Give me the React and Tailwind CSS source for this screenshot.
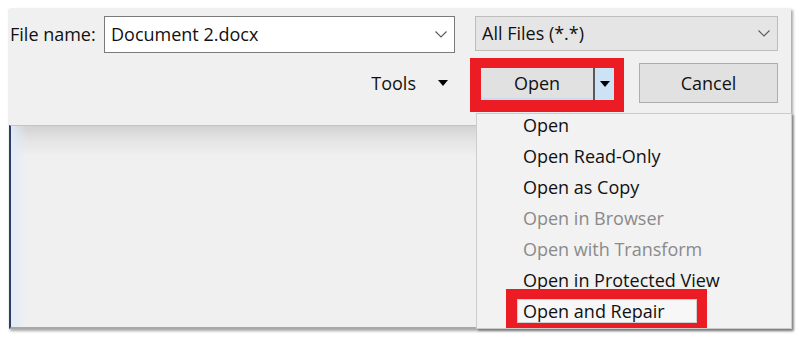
import React from 'react';

const font = { fontFamily: '"Open Sans", "Noto Sans", Arial, sans-serif' };

function Chevron() {
  return (
    <svg width="12" height="7" viewBox="0 0 12 7" className="shrink-0">
      <polyline points="0.5,0.5 6,6 11.5,0.5" fill="none" stroke="#5a5a5a" strokeWidth="1.1" />
    </svg>
  );
}

function Triangle() {
  return (
    <svg width="10" height="6" viewBox="0 0 10 6" className="shrink-0">
      <polygon points="0,0 10,0 5,6" fill="#000" />
    </svg>
  );
}

const menuItems = [
  { label: 'Open' },
  { label: 'Open Read-Only' },
  { label: 'Open as Copy' },
  { label: 'Open in Browser', disabled: true },
  { label: 'Open with Transform', disabled: true },
  { label: 'Open in Protected View' },
];

export default function App() {
  return (
    <div className="w-[800px] h-[337px] bg-white pt-[8px] pl-[8px] overflow-hidden" style={font}>
      <div className="relative w-[783px] h-[321px] bg-[#f0f0f0] rounded-tl-[3px] shadow-[2px_2px_3px_rgba(0,0,0,0.35)] flex flex-col text-[18px] text-[#111]">
        {/* top section */}
        <div className="h-[117px] pt-[8px] pl-[2px] pr-[13px] flex flex-col">
          <div className="flex items-center h-[37px]">
            <span className="w-[94px] shrink-0">File name:</span>
            <div className="w-[351px] h-[37px] bg-white border border-[#7a7a7a] flex items-center justify-between pl-[6px] pr-[7px]">
              <span>Document 2.docx</span>
              <Chevron />
            </div>
            <div className="ml-[20px] w-[303px] h-[35px] bg-[#e5e5e5] border border-[#bdbdbd] flex items-center justify-between pl-[6px] pr-[7px] self-start">
              <span>All Files (*.*)</span>
              <Chevron />
            </div>
          </div>
          <div className="flex justify-end items-start mt-[5px]">
            <div className="flex items-center h-[50px] gap-[22px]">
              <span>Tools</span>
              <Triangle />
            </div>
            <div className="ml-[22px] flex border-[#ec1c24] border-t-[10px] border-b-[12px] border-l-[11px] border-r-[10px] relative z-10">
              <div className="w-[112px] h-[32px] bg-[#e1e1e1] border-b-[2px] border-[#c9dcef] flex items-center justify-center">
                Open
              </div>
              <div className="w-[2px] h-[32px] bg-[#5a5a5a]" />
              <div className="w-[19px] h-[32px] bg-[#cce2f5] flex items-center justify-center">
                <Triangle />
              </div>
            </div>
            <div className="ml-[15px] mt-[5px] w-[139px] h-[40px] bg-[#e1e1e1] border border-[#adadad] flex items-center justify-center">
              Cancel
            </div>
          </div>
        </div>

        {/* lower section */}
        <div className="flex-1 border-t border-[#c4c4c4] border-b-[2px] border-b-[#a8a8a8] border-l-[2px] border-l-[#2c3f66] ml-[1px] bg-[linear-gradient(to_bottom,#d2d2d2_0px,#e4e4e4_14px,#f0f0f0_30px)]">
          <div className="w-[16px] h-full bg-[linear-gradient(to_right,rgba(225,235,248,0.9),rgba(240,240,240,0))]" />
        </div>

        {/* dropdown menu */}
        <div className="absolute left-[468px] top-[105px] w-[316px] h-[216px] bg-[#f2f2f2] border border-[#cccccc] shadow-[2px_2px_2px_rgba(0,0,0,0.3)] z-0">
          {menuItems.map((item) => (
            <div
              key={item.label}
              className={`h-[31px] flex items-center pl-[46px] pb-[9px] ${item.disabled ? 'text-[#8a8a8a]' : 'text-[#111]'}`}
            >
              {item.label}
            </div>
          ))}
          <div className="relative -mt-[11px] ml-[29px] w-[201px] h-[39px] border-[#ec1c24] border-t-[10px] border-l-[11px] border-r-[10px] border-b-[5px]">
            <div className="w-[180px] h-[24px] bg-[#f7f7f7] border border-[#d0d0d0] flex items-center pl-[5px] leading-none">
              Open and Repair
            </div>
          </div>
        </div>
      </div>
    </div>
  );
}
